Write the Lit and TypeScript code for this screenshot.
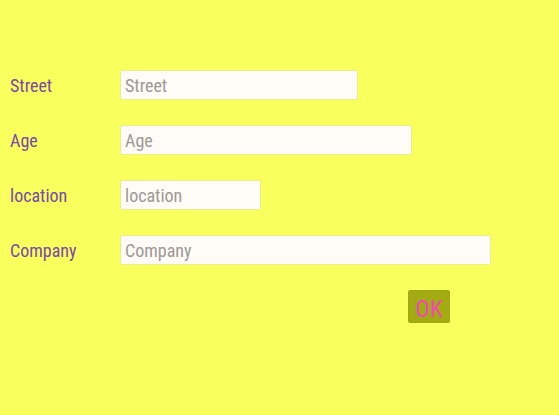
import { LitElement, html, css } from "lit";
import { customElement } from "lit/decorators.js";
import { classMap } from "lit/directives/class-map.js";

type Size = "small" | "medium" | "large" | "full";

interface Field {
  id: string;
  label: string;
  size: Size;
}

const FIELDS: Field[] = [
  { id: "street", label: "Street", size: "medium" },
  { id: "age", label: "Age", size: "large" },
  { id: "location", label: "location", size: "small" },
  { id: "company", label: "Company", size: "full" },
];

@customElement("app-root")
export class AppRoot extends LitElement {
  static styles = css`
    :host {
      display: block;
      box-sizing: border-box;
      min-height: 100vh;
      padding: 70px 10px;
      background: #f9ff5c;
      font-family: "Roboto Condensed", "Liberation Sans", Arial, sans-serif;
      font-size: 18px;
    }
    .form {
      display: grid;
      gap: 25px;
      max-width: 481px;
    }
    .row {
      display: grid;
      grid-template-columns: 110px minmax(0, 1fr);
      align-items: center;
    }
    .label {
      padding-top: 2px;
      color: #7a4aa6;
      line-height: 28px;
    }
    .input {
      box-sizing: border-box;
      width: 100%;
      height: 30px;
      padding: 1px 4px 0;
      border: 1px solid #eeea90;
      border-radius: 2px;
      background: #fffbf7;
      color: #555;
      font: inherit;
    }
    .input::placeholder {
      color: #9c9996;
      opacity: 1;
    }
    .small {
      max-width: 141px;
    }
    .medium {
      max-width: 238px;
    }
    .large {
      max-width: 292px;
    }
    .actions {
      display: flex;
      justify-content: flex-end;
      padding-right: 41px;
    }
    .ok {
      min-width: 42px;
      height: 33px;
      padding: 4px 4px 0;
      border: 1px solid #9fa712;
      border-radius: 2px;
      background: #a3ab12;
      color: #f048b4;
      font: inherit;
      font-size: 24px;
      line-height: 28px;
    }
  `;

  render() {
    return html`
      <form class="form" @submit=${(e: Event) => e.preventDefault()}>
        ${FIELDS.map(
          (f) => html`
            <div class="row">
              <label class="label" for=${f.id}>${f.label}</label>
              <input
                class=${classMap({ input: true, [f.size]: true })}
                id=${f.id}
                name=${f.id}
                type="text"
                placeholder=${f.label}
              />
            </div>
          `
        )}
        <div class="actions">
          <button class="ok" type="submit">OK</button>
        </div>
      </form>
    `;
  }
}
